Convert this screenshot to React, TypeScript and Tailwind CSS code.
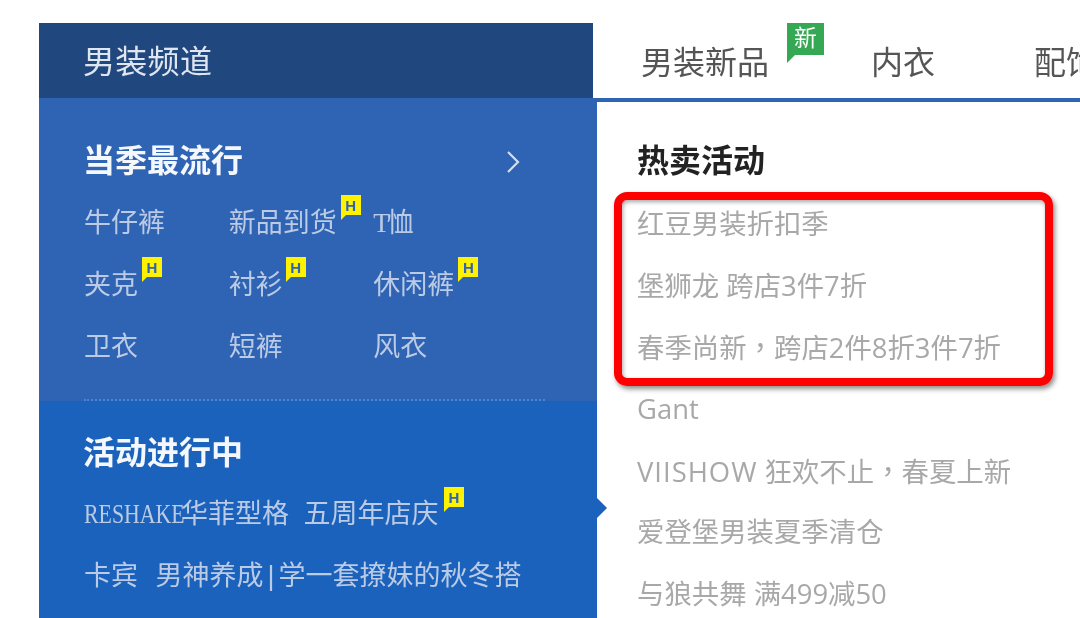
import type { ReactNode } from "react";

const SANS = "font-['Liberation_Sans','Noto_Sans_CJK_SC',sans-serif]";

function HotBadge({ className }: { className: string }) {
  return (
    <span className={`absolute flex h-[20px] w-[20px] items-center justify-center bg-[#fff200] font-['Liberation_Sans'] text-[15px] leading-none font-bold text-[#2f63b3] ${className}`}>
      H
      <svg className="absolute top-[20px] left-0" width="5" height="5" viewBox="0 0 5 5">
        <polygon points="0,0 5,0 0,5" fill="#fff200" />
      </svg>
    </span>
  );
}

function MenuItem({ label, badge, badgeClass }: { label: ReactNode; badge?: boolean; badgeClass?: string }) {
  return (
    <a className="relative h-[62px] whitespace-nowrap leading-[62px]">
      {label}
      {badge && <HotBadge className={badgeClass ?? ""} />}
    </a>
  );
}

// centred comma like the reference, the SC font puts it low and to the left
function Comma() {
  return <span className="font-['Noto_Sans_CJK_TC']">，</span>;
}

const hotItems = [
  <>红豆男装折扣季</>,
  <>堡狮龙 跨店3件7折</>,
  <>春季尚新<Comma />跨店2件8折3件7折</>,
  <>Gant</>,
  <><span className="tracking-[1px]">VIISHOW</span> 狂欢不止<Comma />春夏上新</>,
  <>爱登堡男装夏季清仓</>,
  <>与狼共舞 满499减50</>,
];

export default function App() {
  return (
    <div className={`relative h-[618px] w-[1080px] overflow-hidden bg-white pt-[23px] pl-[39px] blur-[0.6px] ${SANS}`}>
      {/* top bar */}
      <div className="flex h-[79px]">
        <div className="flex h-[75px] w-[554px] shrink-0 items-center bg-[#20487f] pt-[3px] pl-[44px] text-[32px] tracking-[0.3px] text-[#dfe6f0]">
          男装频道
        </div>
        <div className="flex h-[79px] min-w-0 flex-1 items-center border-b-4 border-[#2f63b3] pt-[4px] pl-[48px] text-[32px] whitespace-nowrap text-[#555]">
          <span className="relative mr-[102px]">
            男装新品
            <span className="absolute top-[-16px] left-[146px] flex h-[32px] w-[37px] items-center justify-center bg-[#34a853] text-[23px] leading-none text-white">
              新
              <svg className="absolute top-[32px] left-0" width="8" height="8" viewBox="0 0 8 8">
                <polygon points="0,0 8,0 0,8" fill="#34a853" />
              </svg>
            </span>
          </span>
          <span className="mr-[99px]">内衣</span>
          <span>配饰</span>
        </div>
      </div>

      <div className="mt-[-4px] flex">
        {/* left menu */}
        <div className="relative w-[558px] shrink-0 text-[27px] text-[#bccbe5]">
          <div className="h-[303px] bg-[#2f63b3] pt-[44px] pl-[45px]">
            <div className="flex h-[38px] items-center justify-between pr-[77px] text-[32px] leading-none font-bold text-[#f4f7fb]">
              <span className="-ml-[1px]">当季最流行</span>
              <svg className="mt-[2px]" width="14" height="24" viewBox="0 0 14 24" fill="none" stroke="#d5dfef" strokeWidth="2.2">
                <path d="M2 2l10 10L2 22" />
              </svg>
            </div>
            <div className="mt-[12px] grid w-[434px] grid-cols-3 font-['Liberation_Serif','Noto_Sans_CJK_SC',serif]">
              <MenuItem label="牛仔裤" />
              <MenuItem label="新品到货" badge badgeClass="top-[3px] left-[112px]" />
              <MenuItem label={<><span className="tracking-[-3px]">T</span>恤</>} />
              <MenuItem label="夹克" badge badgeClass="top-[3px] left-[58px]" />
              <MenuItem label="衬衫" badge badgeClass="top-[3px] left-[57px]" />
              <MenuItem label="休闲裤" badge badgeClass="top-[3px] left-[85px]" />
              <MenuItem label="卫衣" />
              <MenuItem label="短裤" />
              <MenuItem label="风衣" />
            </div>
          </div>
          <div className="h-[217px] bg-[#1b62bc] pl-[45px]">
            <div className="h-0 w-[461px] -translate-y-[2px] border-t-2 border-dotted border-[#3f86dc]" />
            <div className="pt-[31px] text-[32px] leading-[38px] font-bold text-[#f4f7fb]">
              <span className="-ml-[1px]">活动进行中</span>
            </div>
            <div className="mt-[11px] flex flex-col">
              <a className="relative h-[62px] leading-[62px] whitespace-nowrap [word-spacing:7px]">
                <span className="inline-block w-[97px] origin-left scale-x-[0.78] font-['Liberation_Serif'] text-[28px]">RESHAKE</span>华菲型格 五周年店庆
                <HotBadge className="top-[4px] left-[360px]" />
              </a>
              <a className="h-[62px] leading-[62px] whitespace-nowrap [word-spacing:10px]">
                卡宾 男神养成<span className="mx-[4px]">|</span>学一套撩妹的秋冬搭
              </a>
            </div>
            {/* little arrow pointing at the right panel */}
            <svg className="absolute top-[400px] left-[558px]" width="10" height="20" viewBox="0 0 10 20">
              <polygon points="0,0 10,10 0,20" fill="#1b62bc" />
            </svg>
          </div>
        </div>

        {/* hot list */}
        <div className="min-w-0 flex-1 pt-[44px] pl-[40px]">
          <div className="text-[32px] leading-[38px] font-bold text-[#222]">热卖活动</div>
          <div className="mt-[13px] flex flex-col font-['Open_Sans','Noto_Sans_CJK_SC',sans-serif] text-[27.4px] text-[#a8a8a8]">
            {hotItems.map((item, i) => (
              <div key={i} className="h-[61.7px] leading-[61.7px] whitespace-nowrap">
                {item}
              </div>
            ))}
          </div>
        </div>
      </div>

      {/* red annotation */}
      <div className="absolute top-[192px] left-[614px] h-[194px] w-[439px] rounded-[13px] border-[8px] border-[#ff0000] shadow-[2px_3px_5px_rgba(0,0,0,0.45),inset_1px_2px_4px_rgba(0,0,0,0.35)]" />
    </div>
  );
}
